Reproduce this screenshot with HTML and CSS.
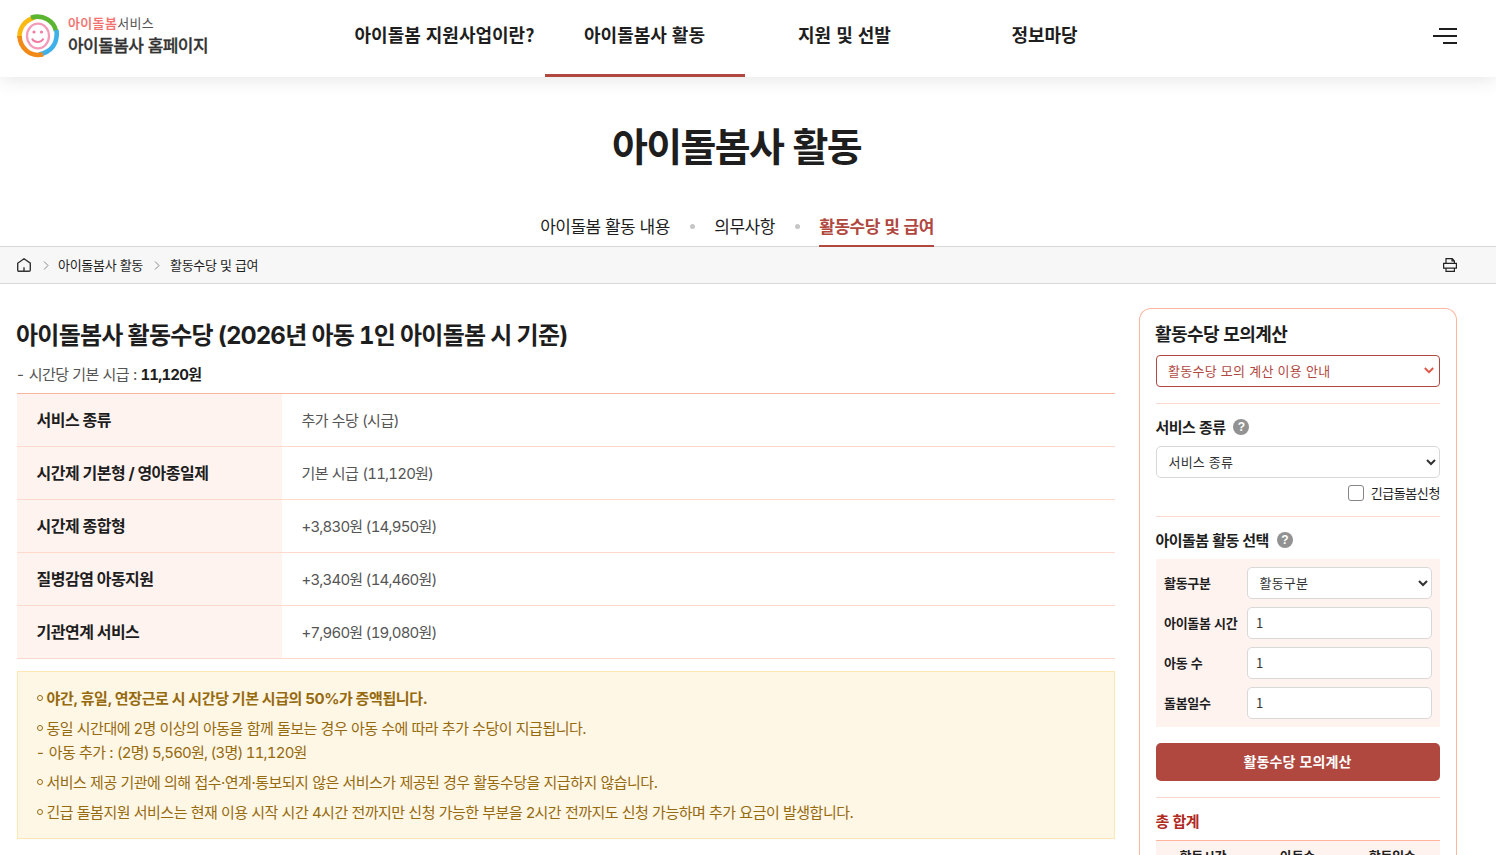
FILE: index.html
```html
<!DOCTYPE html>
<html lang="ko">
<head>
<meta charset="utf-8">
<meta name="viewport" content="width=device-width, initial-scale=1.0">
<title>아이돌봄사 홈페이지</title>
<link rel="stylesheet" href="styles.css">
</head>
<body>
<header class="header">
  <div class="wrap header-in">
    <a class="logo" href="#">
      <svg width="42" height="44" viewBox="0 0 42 44" fill="none">
        <path d="M2.500 24C2 14 8 6 18 3.200" stroke="#fbb914" stroke-width="4.600"/>
        <path d="M14 3.600C26 0 37 7 39 17" stroke="#5cb531" stroke-width="4.600"/>
        <path d="M39.500 16C41 30 34 38 22 40.500" stroke="#3fb0e8" stroke-width="4.600"/>
        <path d="M2.500 22C3 34 13 43 26 40.500" stroke="#f28a18" stroke-width="4.600"/>
        <ellipse cx="21" cy="22" rx="11" ry="12.300" stroke="#f49ab8" stroke-width="2.200"/>
        <circle cx="17" cy="18" r="1.600" fill="#f07da3"/>
        <circle cx="24.500" cy="18" r="1.600" fill="#f07da3"/>
        <path d="M15 24.500C17 29 24 29 26.500 24.500" stroke="#f07da3" stroke-width="2"/>
      </svg>
      <span class="logo-text">
        <span class="logo-top"><b>아이돌봄</b>서비스</span>
        <span class="logo-name">아이돌봄사 홈페이지</span>
      </span>
    </a>
    <nav class="gnb">
      <a href="#">아이돌봄 지원사업이란?</a>
      <a href="#" class="on">아이돌봄사 활동</a>
      <a href="#">지원 및 선발</a>
      <a href="#">정보마당</a>
    </nav>
    <button class="menu-btn" type="button" aria-label="전체메뉴"><i></i><i></i><i></i></button>
  </div>
</header>

<div class="visual">
  <div class="wrap">
    <h1>아이돌봄사 활동</h1>
    <ul class="sub-nav">
      <li><a href="#">아이돌봄 활동 내용</a></li>
      <li><a href="#">의무사항</a></li>
      <li><a href="#" class="on">활동수당 및 급여</a></li>
    </ul>
  </div>
</div>

<div class="location">
  <div class="wrap location-in">
    <svg class="home" width="14" height="14" viewBox="0 0 14 14" fill="none" stroke="#333" stroke-width="1.400"><path d="M.7 5.200L7 .8l6.300 4.400v6.800q0 1.300-1.300 1.300H2Q.7 13.300.7 12zM7 13V9.200"/></svg>
    <svg class="arrow" width="6" height="9" viewBox="0 0 6 9" fill="none" stroke="#888"><path d="M1 .5l4 4-4 4"/></svg>
    <a href="#">아이돌봄사 활동</a>
    <svg class="arrow" width="6" height="9" viewBox="0 0 6 9" fill="none" stroke="#888"><path d="M1 .5l4 4-4 4"/></svg>
    <a href="#">활동수당 및 급여</a>
    <svg class="print" width="14" height="14" viewBox="0 0 14 14" fill="none" stroke="#222" stroke-width="1.200"><path d="M3 5V.6h6.200L11.400 3v2M.6 5.400h12.800v4.800H.6zM3 10.200v3.200h8.400v-3.200M9 1v2h2"/></svg>
  </div>
</div>

<div class="wrap container">
  <main class="content">
    <h2>아이돌봄사 활동수당 (2026년 아동 <span class="one">1</span>인 아이돌봄 시 기준)</h2>
    <p class="base"><span class="dash">-</span> 시간당 기본 시급 : <strong class="num">11,120원</strong></p>
    <table class="tbl">
      <tr><th>서비스 종류</th><td>추가 수당 (시급)</td></tr>
      <tr><th>시간제 기본형 / 영아종일제</th><td>기본 시급 <span class="num">(11,120원)</span></td></tr>
      <tr><th>시간제 종합형</th><td><span class="num">+3,830원 (14,950원)</span></td></tr>
      <tr><th>질병감염 아동지원</th><td><span class="num">+3,340원 (14,460원)</span></td></tr>
      <tr><th>기관연계 서비스</th><td><span class="num">+7,960원 (19,080원)</span></td></tr>
    </table>
    <ul class="notice">
      <li><strong>야간, 휴일, 연장근로 시 시간당 기본 시급의 50%가 증액됩니다.</strong></li>
      <li>동일 시간대에 2명 이상의 아동을 함께 돌보는 경우 아동 수에 따라 추가 수당이 지급됩니다.
        <p><span class="dash">-</span> 아동 추가 : <span class="num">(2명) 5,560원, (3명) 11,120원</span></p></li>
      <li>서비스 제공 기관에 의해 접수·연계·통보되지 않은 서비스가 제공된 경우 활동수당을 지급하지 않습니다.</li>
      <li>긴급 돌봄지원 서비스는 현재 이용 시작 시간 4시간 전까지만 신청 가능한 부분을 2시간 전까지도 신청 가능하며 추가 요금이 발생합니다.</li>
    </ul>
  </main>

  <aside class="calc">
    <h3>활동수당 모의계산</h3>
    <button class="guide" type="button">활동수당 모의 계산 이용 안내
      <svg width="10" height="7" viewBox="0 0 10 7" fill="none" stroke="#e0584b" stroke-width="2"><path d="M.8 1L5 5.200 9.200 1"/></svg>
    </button>
    <section class="box service">
      <h4>서비스 종류 <span class="help">?</span></h4>
      <select><option>서비스 종류</option></select>
      <label class="chk"><input type="checkbox"><span>긴급돌봄신청</span></label>
    </section>
    <section class="box">
      <h4>아이돌봄 활동 선택 <span class="help">?</span></h4>
      <div class="form">
        <label for="kind">활동구분</label><select id="kind"><option>활동구분</option></select>
        <label for="time">아이돌봄 시간</label><input id="time" type="text" value="1">
        <label for="child">아동 수</label><input id="child" type="text" value="1">
        <label for="days">돌봄일수</label><input id="days" type="text" value="1">
      </div>
      <button class="submit" type="button">활동수당 모의계산</button>
    </section>
    <section class="box total">
      <h4>총 합계</h4>
      <table>
        <tr><th>활동시간</th><th>아동수</th><th>활동일수</th></tr>
      </table>
    </section>
  </aside>
</div>
</body>
</html>
```
FILE: styles.css
```css
*, *::before {
  box-sizing: border-box;
}
html, body {
  height: 855px;
  overflow: hidden;
}
body, h1, h2, h3, h4, p, ul {
  margin: 0;
  padding: 0;
}
body {
  background: #fff;
  color: #1e1e1e;
  font-family: "Noto Sans CJK KR", sans-serif;
  font-size: 15px;
}
ul {
  list-style: none;
}
a {
  color: inherit;
  text-decoration: none;
}
svg {
  display: block;
}
button, select, input {
  font-family: inherit;
}
.wrap {
  width: 1440px;
  margin-left: 17px;
}

/* header */
.header {
  position: relative;
  height: 77px;
  background: #fff;
  box-shadow: 0 0 20px rgba(0, 0, 0, .13);
}
.header-in {
  display: flex;
  height: 77px;
}
.logo {
  display: flex;
  width: 328px;
  padding-top: 14px;
}
.logo-text {
  display: flex;
  flex-direction: column;
  margin: -1px 0 0 9px;
}
.logo-top {
  height: 20px;
  font-size: 13px;
  line-height: 19px;
  letter-spacing: 0.35px;
  color: #555;
}
.logo-top b {
  font-weight: 500;
  color: #f2716f;
  -webkit-text-stroke: 0.2px #f2716f;
}
.logo-name {
  font-size: 17px;
  line-height: 24px;
  font-weight: 500;
  letter-spacing: -0.55px;
  color: #333;
  -webkit-text-stroke: 0.3px #333;
}
.gnb {
  display: flex;
}
.gnb a {
  width: 200px;
  height: 77px;
  font-size: 18px;
  font-weight: 700;
  line-height: 68px;
  text-align: center;
  text-indent: -1px;
  white-space: nowrap;
}
.gnb .on {
  border-bottom: 3px solid #b0483f;
}
.menu-btn {
  display: flex;
  flex-direction: column;
  align-items: flex-end;
  gap: 5px;
  margin-left: auto;
  padding: 28px 0 0;
  border: 0;
  background: none;
}
.menu-btn i {
  width: 18px;
  height: 2px;
  background: #1e1e1e;
}
.menu-btn i:nth-child(2) {
  width: 24px;
}
.menu-btn i:nth-child(3) {
  width: 14px;
}

/* page title */
.visual {
  height: 170px;
  border-bottom: 1px solid #d8d8d8;
}
h1 {
  padding-top: 38px;
  font-size: 39px;
  line-height: 58px;
  font-weight: 700;
  letter-spacing: -1.65px;
  text-align: center;
  text-indent: -1px;
}
.sub-nav {
  display: flex;
  justify-content: center;
  margin-top: 34px;
}
.sub-nav li {
  display: flex;
  font-size: 17px;
  line-height: 38px;
  letter-spacing: -0.5px;
}
.sub-nav li + li::before {
  content: "";
  width: 5px;
  height: 5px;
  margin: 17px 19px 0 20.500px;
  border-radius: 50%;
  background: #c6c6c6;
}
.sub-nav a {
  height: 40px;
}
.sub-nav .on {
  border-bottom: 2px solid #b0483f;
  color: #b0483f;
  font-weight: 700;
}
.location {
  height: 37px;
  border-bottom: 1px solid #d8d8d8;
  background: #f7f7f7;
}
.location-in {
  display: flex;
  align-items: center;
  height: 36px;
  font-size: 13px;
  letter-spacing: -0.3px;
}
.location-in a {
  padding-bottom: 2px;
}
.arrow {
  margin: 0 9.500px 0 11.500px;
}
.print {
  margin-left: auto;
}

/* content */
.container {
  display: flex;
  justify-content: space-between;
  padding-top: 24px;
}
.content {
  width: 1098px;
  font-family: "Inter", "Noto Sans CJK KR", sans-serif;
  letter-spacing: -0.5px;
}
.num, .one {
  font-variant-numeric: tabular-nums;
}
.num {
  letter-spacing: -0.8px;
}
h2 {
  margin: 10px 0 0 -1px;
  font-size: 24px;
  line-height: 36px;
  letter-spacing: -0.75px;
}
.base {
  margin-top: 9px;
  height: 30px;
  line-height: 24px;
  color: #555;
}
.base strong {
  color: #1e1e1e;
}
.dash {
  margin-right: 1.500px;
}
.tbl {
  width: 100%;
  border-collapse: collapse;
  border-top: 1px solid #f9b6a0;
}
.tbl th, .tbl td {
  height: 53px;
  padding: 0 20px 2px 19.500px;
  border-bottom: 1px solid #ffd9cc;
  text-align: left;
}
.tbl th {
  width: 265px;
  background: #fff3f0;
  font-size: 16px;
}
.tbl td {
  color: #555;
}
.notice {
  height: 168px;
  margin-top: 12px;
  padding: 15px 19px 0;
  border: 1px solid #ffe7b3;
  background: #fff7e6;
  color: #966a0e;
  line-height: 24px;
}
.notice li {
  position: relative;
  margin-bottom: 6px;
  padding-left: 9.500px;
}
.notice li::before {
  content: "";
  position: absolute;
  left: 0;
  top: 8px;
  width: 6px;
  height: 6px;
  border: 1px solid #966a0e;
  border-radius: 50%;
}
.notice strong {
  letter-spacing: -0.38px;
}
.notice p {
  margin-left: -9.500px;
}

/* calculator */
.calc {
  width: 318px;
  height: 547px;
  padding: 11px 16px 0;
  border: 1px solid #fcb69f;
  border-bottom: 0;
  border-radius: 12px 12px 0 0;
  letter-spacing: -0.4px;
}
h3 {
  margin-left: -1px;
  font-size: 18px;
  line-height: 26px;
  letter-spacing: -0.6px;
}
.guide {
  display: flex;
  align-items: center;
  justify-content: space-between;
  width: 100%;
  height: 32px;
  margin: 9px 0 16px;
  padding: 0 5px 2px 11px;
  border: 1px solid #b0483f;
  border-radius: 4px;
  background: #fff;
  color: #b0483f;
  font-size: 13px;
  letter-spacing: 0.27px;
}
.box {
  border-top: 1px solid #fcd9cf;
}
h4 {
  display: flex;
  align-items: center;
  height: 42px;
  margin-left: -0.500px;
  padding-top: 3px;
  font-size: 15px;
  letter-spacing: -0.55px;
}
.help {
  width: 16px;
  height: 16px;
  margin: 1px 0 0 8px;
  border-radius: 50%;
  background: #929292;
  color: #fff;
  font: 700 12px/16px "Liberation Sans", sans-serif;
  letter-spacing: 0;
  text-align: center;
}
select, input[type=text] {
  width: 100%;
  height: 32px;
  padding: 0 8px 2px;
  border: 1px solid #d8d8d8;
  border-radius: 5px;
  background: #fff;
  color: #333;
  font-size: 13px;
}
select {
  padding: 0 3px 2px 7.500px;
  letter-spacing: 0.2px;
}
.service {
  height: 113px;
}
.chk {
  display: flex;
  align-items: center;
  justify-content: flex-end;
  height: 30px;
  font-size: 13px;
  letter-spacing: -0.4px;
}
.chk span {
  padding-bottom: 2px;
}
.chk input {
  appearance: none;
  width: 16px;
  height: 16px;
  margin: 0 6.500px 0 0;
  border: 1px solid #858585;
  border-radius: 3px;
}
.form {
  display: grid;
  grid-template-columns: 83px 1fr;
  row-gap: 8px;
  align-items: center;
  padding: 8px;
  background: #fff3f0;
}
.form label {
  padding-bottom: 2px;
  font-size: 13px;
  font-weight: 700;
  letter-spacing: -0.3px;
}
.submit {
  display: block;
  width: 100%;
  height: 38px;
  margin: 16px 0;
  padding: 0 1px 2px 0;
  border: 0;
  border-radius: 5px;
  background: #b0483f;
  color: #fff;
  font-size: 14px;
  font-weight: 700;
  letter-spacing: 0.1px;
}
.total h4 {
  color: #b02a1e;
}
.total table {
  width: 100%;
  table-layout: fixed;
  border-collapse: collapse;
  border-top: 1px solid #fcb69f;
}
.total th {
  height: 32px;
  padding: 0 1px 2px 0;
  background: #fff3f0;
  font-size: 13px;
  letter-spacing: -0.3px;
}
```
